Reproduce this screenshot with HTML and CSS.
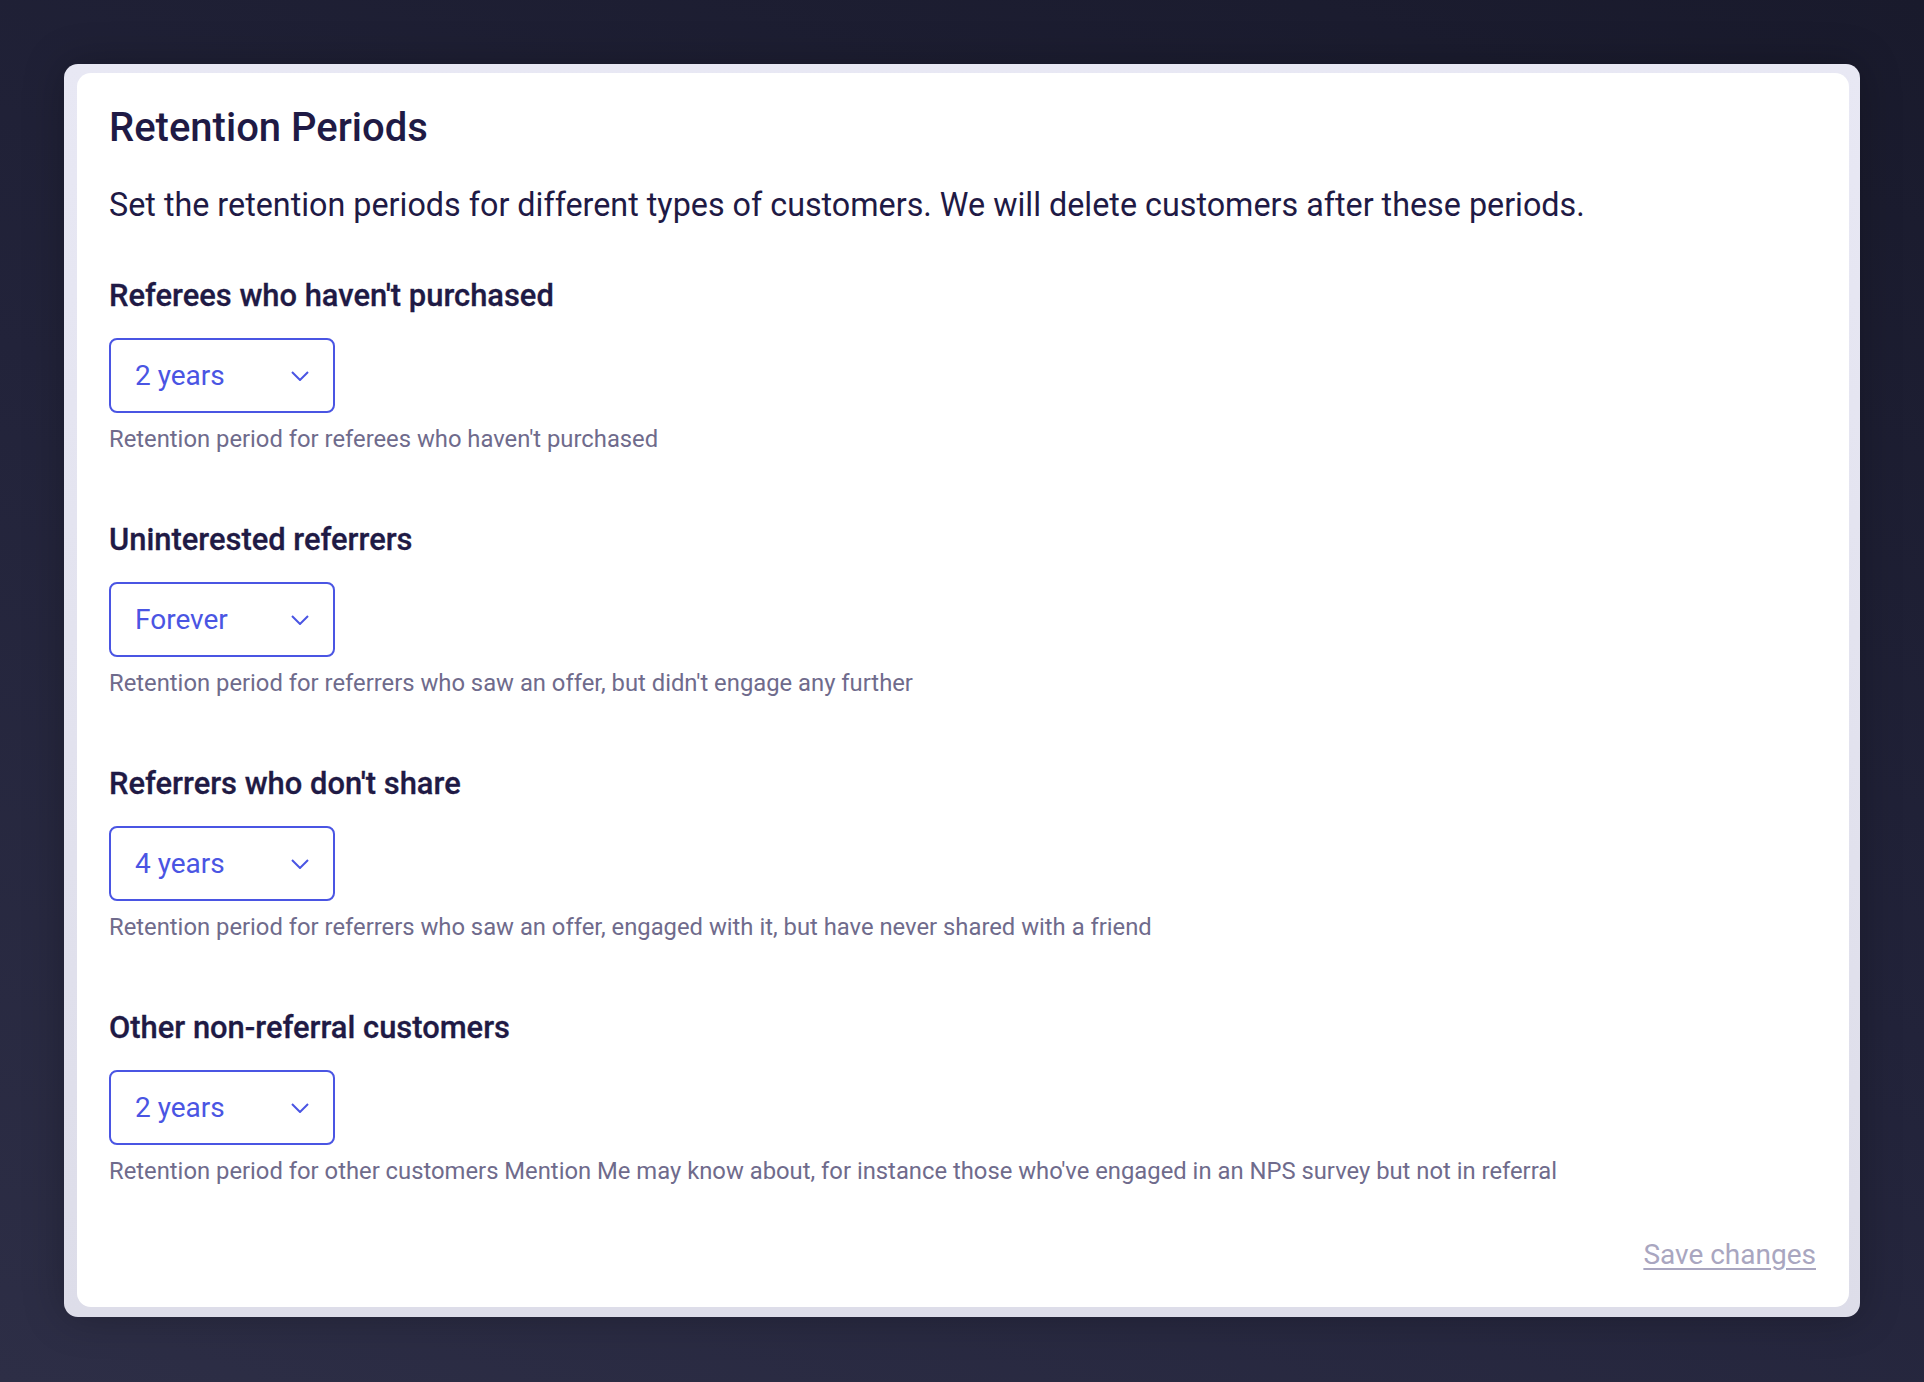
FILE: index.html
```html
<!DOCTYPE html>
<html>
<head>
    <meta charset="UTF-8">
    <title>Retention Periods</title>
    <link rel="stylesheet" href="styles.css">
</head>
<body>
<div class="frame">
    <div class="card">
        <h1 class="title">Retention Periods</h1>
        <p class="intro">Set the retention periods for different types of customers. We will delete customers after these periods.</p>

        <div class="field">
            <h2 class="label">Referees who haven't purchased</h2>
            <div class="select"><span>2 years</span>
                <svg width="18" height="10" viewBox="0 0 18 10"><path d="M1 1l8 8 8-8" fill="none" stroke="#4a55e3" stroke-width="2"/></svg>
            </div>
            <p class="hint">Retention period for referees who haven't purchased</p>
        </div>

        <div class="field">
            <h2 class="label">Uninterested referrers</h2>
            <div class="select"><span>Forever</span>
                <svg width="18" height="10" viewBox="0 0 18 10"><path d="M1 1l8 8 8-8" fill="none" stroke="#4a55e3" stroke-width="2"/></svg>
            </div>
            <p class="hint">Retention period for referrers who saw an offer, but didn't engage any further</p>
        </div>

        <div class="field">
            <h2 class="label">Referrers who don't share</h2>
            <div class="select"><span>4 years</span>
                <svg width="18" height="10" viewBox="0 0 18 10"><path d="M1 1l8 8 8-8" fill="none" stroke="#4a55e3" stroke-width="2"/></svg>
            </div>
            <p class="hint">Retention period for referrers who saw an offer, engaged with it, but have never shared with a friend</p>
        </div>

        <div class="field">
            <h2 class="label">Other non-referral customers</h2>
            <div class="select"><span>2 years</span>
                <svg width="18" height="10" viewBox="0 0 18 10"><path d="M1 1l8 8 8-8" fill="none" stroke="#4a55e3" stroke-width="2"/></svg>
            </div>
            <p class="hint">Retention period for other customers Mention Me may know about, for instance those who've engaged in an NPS survey but not in referral</p>
        </div>

        <div class="actions">
            <a href="#" class="save">Save changes</a>
        </div>
    </div>
</div>
</body>
</html>
```

FILE: styles.css
```css
* {
    margin: 0;
    padding: 0;
    box-sizing: border-box;
}

html, body {
    height: 100%;
}

body {
    background: linear-gradient(200deg, #191a2c 0%, #22233a 50%, #2d2e46 100%);
    font-family: Roboto, "Liberation Sans", sans-serif;
    color: #1f1a45;
    padding: 64px 64px 0 64px;
}

.frame {
    width: 1796px;
    padding: 9px 11px 10px 13px;
    background: linear-gradient(180deg, #e8e8f4, #dddde9);
    border-radius: 14px;
    box-shadow: 0 0 40px rgba(0, 0, 0, 0.25);
}

.card {
    background: #ffffff;
    border-radius: 14px;
    padding: 31px 33px 36px 32px;
}

.title {
    font-size: 40px;
    font-weight: 500;
    line-height: 48px;
}

.intro {
    font-size: 32.3px;
    line-height: 40px;
    margin-top: 33px;
}

.field {
    margin-top: 51px;
}

.field + .field {
    margin-top: 65px;
}

.label {
    font-size: 30.9px;
    font-weight: 500;
    line-height: 40px;
    -webkit-text-stroke: 0.3px #1f1a45;
}

.select {
    margin-top: 22px;
    width: 226px;
    height: 75px;
    border: 2px solid #4a55e3;
    border-radius: 8px;
    display: flex;
    align-items: center;
    justify-content: space-between;
    padding: 0 24px 0 24px;
    color: #4a55e3;
    font-size: 28px;
}

.hint {
    margin-top: 10px;
    font-size: 23.8px;
    line-height: 32px;
    color: #6f6b8c;
}

.actions {
    display: flex;
    justify-content: flex-end;
    margin-top: 51px;
}

.save {
    font-size: 28px;
    color: #a9a6c0;
    text-decoration: underline;
    text-underline-offset: 4px;
}
```
